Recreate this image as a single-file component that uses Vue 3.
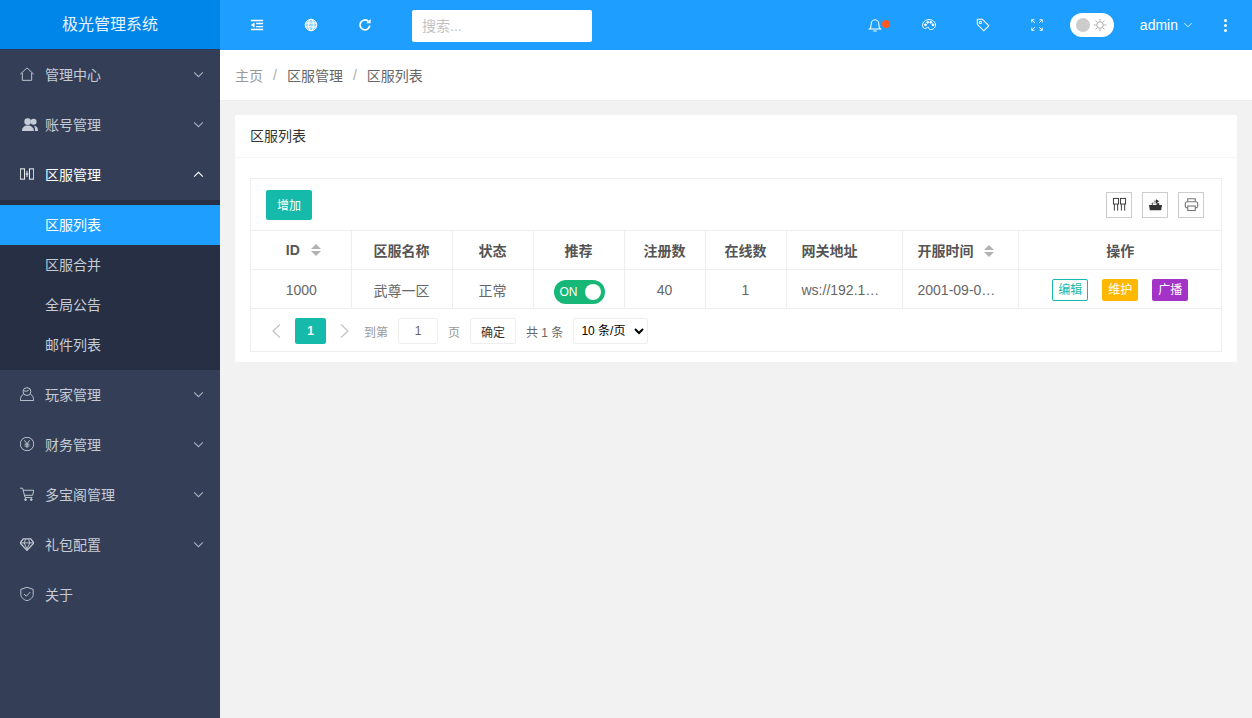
<script setup>
import { ref } from 'vue'

const menus = [
  { label: '管理中心', icon: 'home', arrow: true },
  { label: '账号管理', icon: 'users', arrow: true },
  { label: '区服管理', icon: 'server', arrow: true, open: true, children: ['区服列表', '区服合并', '全局公告', '邮件列表'] },
  { label: '玩家管理', icon: 'user', arrow: true },
  { label: '财务管理', icon: 'rmb', arrow: true },
  { label: '多宝阁管理', icon: 'cart', arrow: true },
  { label: '礼包配置', icon: 'diamond', arrow: true },
  { label: '关于', icon: 'shield', arrow: false }
]

const columns = [
  { label: 'ID', width: 101, sort: true, center: true, first: true },
  { label: '区服名称', width: 101, center: true },
  { label: '状态', width: 81, center: true },
  { label: '推荐', width: 91, center: true },
  { label: '注册数', width: 81, center: true },
  { label: '在线数', width: 81, center: true },
  { label: '网关地址', width: 116 },
  { label: '开服时间', width: 116, sort: true },
  { label: '操作', width: 204, center: true }
]

const keyword = ref('')
</script>

<template>
  <div class="layout">
    <aside class="side">
      <div class="logo">极光管理系统</div>
      <ul class="menu">
        <li v-for="m in menus" :key="m.label">
          <div class="menu-item" :class="{ open: m.open }">
            <span class="icon-box">
              <svg class="menu-icon" :class="{ wide: m.icon === 'users' }" viewBox="0.5 0.5 15 15" fill="none" stroke="currentColor" stroke-width="1">
                <template v-if="m.icon === 'home'">
                  <path d="M.8 8.200 8 1.500l7.200 6.700" />
                  <path d="M3 6.800v8h10v-8" />
                </template>
                <template v-else-if="m.icon === 'users'">
                  <g fill="currentColor" stroke="none">
                    <circle cx="5.800" cy="5.800" r="3.100" />
                    <circle cx="11.400" cy="5.800" r="2.800" />
                    <path d="M.5 14.500c0-3.200 2.100-5 5.300-5s5.800 1.800 5.800 5z" />
                    <path d="M12.600 14.500h2.900c0-2.800-1.100-4.600-3.900-4.800 1 1.200 1.300 3 1 4.800z" />
                  </g>
                </template>
                <template v-else-if="m.icon === 'server'">
                  <rect x=".8" y="2.500" width="4.600" height="11" />
                  <rect x="10.600" y="2.500" width="4.600" height="11" />
                  <path d="M6.600 8h2.800M8 4.800v6.400" />
                </template>
                <template v-else-if="m.icon === 'user'">
                  <circle cx="8" cy="5.400" r="4.200" />
                  <path d="M4.400 7.800C2.200 9.400 1 11.600.8 15h14.400c-.2-3.400-1.400-5.600-3.600-7.200" />
                  <path d="M4 4.400c2.200 1.100 5.400.7 6.400-1.200" />
                </template>
                <template v-else-if="m.icon === 'rmb'">
                  <circle cx="8" cy="8" r="7.200" />
                  <path d="m5.200 4 2.800 3.800L10.800 4M8 7.800v4.600M5.400 8.200h5.200M5.400 10.200h5.200" />
                </template>
                <template v-else-if="m.icon === 'cart'">
                  <path d="M.5 1.800h2.800l2.600 10h7.800" />
                  <path d="M3.800 4h11.400l-1.100 5.400H5" />
                  <circle cx="6.400" cy="14" r="1" fill="currentColor" />
                  <circle cx="12.600" cy="14" r="1" fill="currentColor" />
                </template>
                <template v-else-if="m.icon === 'diamond'">
                  <path d="M4 2.500h8l3.400 4.300L8 14.800.6 6.800z" stroke-width="1.400" />
                  <path d="M1 6.800h14M5 6.800 8 13.400l3-6.600M5 6.800l1.400-3.800M11 6.800 9.600 3" />
                </template>
                <template v-else>
                  <path d="M8 .8 14.600 3v5.400c0 3.400-3 5.700-6.600 6.900-3.600-1.200-6.600-3.500-6.600-6.900V3z" />
                  <path d="m4.800 8 2.400 2.400L11.400 6" />
                </template>
              </svg>
            </span>
            <span class="menu-label">{{ m.label }}</span>
            <svg v-if="m.arrow" class="menu-arrow" viewBox="0 0 12 8" fill="none" stroke="currentColor" stroke-width="1.200">
              <path :d="m.open ? 'M1 6.500 6 1.500l5 5' : 'M1 1.500l5 5 5-5'" />
            </svg>
          </div>
          <ul v-if="m.children" class="submenu">
            <li v-for="(c, i) in m.children" :key="c" class="sub-item" :class="{ active: i === 0 }">{{ c }}</li>
          </ul>
        </li>
      </ul>
    </aside>

    <div class="main">
      <header class="topbar">
        <div class="top-left">
          <span class="tool">
            <svg viewBox="0 0 16 16" fill="currentColor"><path d="M1 2h14v1.800H1zM7 5.300h8v1.700H7zM7 9h8v1.700H7zM1 12.200h14V14H1zM5.200 5v6L1 8z" /></svg>
          </span>
          <span class="tool">
            <svg viewBox="0 0 16 16" fill="none" stroke="currentColor" stroke-width="1.100"><circle cx="8" cy="8" r="6.600" fill="rgba(255,255,255,.55)" /><ellipse cx="8" cy="8" rx="2.900" ry="6.600" /><path d="M1.800 5.800h12.400M1.800 10.200h12.400" /></svg>
          </span>
          <span class="tool">
            <svg viewBox="0 0 16 16" fill="none" stroke="currentColor" stroke-width="2"><path d="M13.400 8.800A5.600 5.600 0 1 1 11.600 3.700" /><path d="M14.500 1v5H9.500z" fill="currentColor" stroke="none" /></svg>
          </span>
          <input v-model="keyword" class="search" placeholder="搜索..." />
        </div>
        <div class="top-right">
          <span class="tool">
            <svg viewBox="0 0 16 16" fill="none" stroke="currentColor" stroke-width="1.200"><path d="M1.800 12.600h12.400c-1.400-1-1.800-2.500-1.800-5.200 0-3-1.900-5.400-4.400-5.400S3.600 4.400 3.600 7.400c0 2.700-.4 4.200-1.800 5.200z" /><path d="M6 14.800h4" /></svg>
            <i class="dot"></i>
          </span>
          <span class="tool">
            <svg viewBox="0 0 16 16" fill="none" stroke="currentColor" stroke-width="1.100"><path d="M8 1.800C3.700 1.800.6 4.800.6 8.400c0 2.700 2 4 3.600 3.500 1.200-.4 2-1.700 3.200-1.200 1.100.5.200 1.700 1.300 2.400 2.800.8 6.700-1.500 6.700-5.100 0-3.500-3.200-6.200-7.400-6.200z" /><circle cx="4" cy="7.800" r="1.100" fill="currentColor" /><circle cx="6.500" cy="4.900" r="1.100" fill="currentColor" /><circle cx="10.100" cy="4.900" r="1.100" fill="currentColor" /><circle cx="12.500" cy="7.800" r="1.100" fill="currentColor" /></svg>
          </span>
          <span class="tool">
            <svg viewBox="0 0 16 16" fill="none" stroke="currentColor" stroke-width="1.200"><path d="M1.500 1.500h5.800l7.400 7.400-5.800 5.800-7.400-7.400z" /><circle cx="5" cy="5" r="1.300" /></svg>
          </span>
          <span class="tool">
            <svg viewBox="0 0 16 16" fill="none" stroke="currentColor" stroke-width="1.100"><path d="M2 5V2h3M2 2l3.600 3.600M11 2h3v3M14 2l-3.600 3.600M2 11v3h3M2 14l3.600-3.600M14 11v3h-3M14 14l-3.600-3.600" /></svg>
          </span>
          <span class="theme">
            <i class="knob"></i>
            <svg viewBox="0 0 16 16" fill="none" stroke="#999" stroke-width="1"><circle cx="8" cy="8" r="3.800" /><path d="M8 .8v2.200M8 13v2.200M.8 8H3M13 8h2.200M2.900 2.900l1.500 1.500M11.600 11.600l1.500 1.500M2.900 13.100l1.500-1.500M11.600 4.400l1.500-1.500" /></svg>
          </span>
          <span class="account">admin
            <svg viewBox="0 0 12 8" fill="none" stroke="currentColor" stroke-width="1.100"><path d="M1 1.500l5 5 5-5" /></svg>
          </span>
          <span class="more"><i></i><i></i><i></i></span>
        </div>
      </header>

      <nav class="crumbs">
        <span class="crumb-home">主页</span><span class="sep">/</span><span>区服管理</span><span class="sep">/</span><span>区服列表</span>
      </nav>

      <section class="content">
        <div class="card">
          <div class="card-head">区服列表</div>
          <div class="card-body">
            <div class="grid">
              <div class="toolbar">
                <button class="btn-add">增加</button>
                <div class="tool-icons">
                  <span class="tool-btn">
                    <svg viewBox="0 0 16 16" fill="none" stroke="#333" stroke-width="1"><rect x="1.500" y="1.500" width="5.500" height="6" /><rect x="9" y="1.500" width="5.500" height="6" /><path d="M2.500 7.500v7M6 7.500v7M10 7.500v7M13.500 7.500v7" /></svg>
                  </span>
                  <span class="tool-btn">
                    <svg viewBox="0 0 16 16" fill="#333"><path d="M1 8.500h14l-1 5.500H2z" /><path d="M4 8.500V6.200h4.400V4.800H6.500V4h2V2.400L12 4.600 8.500 6.800v-.2H5v1.900z" /><path d="M9 6.600h3v1.900H9z" /></svg>
                  </span>
                  <span class="tool-btn">
                    <svg viewBox="0 0 16 16" fill="none" stroke="#777" stroke-width="1.200"><path d="M4 5V1.800h8V5" /><rect x="1.400" y="5" width="13.200" height="6.600" rx="2" /><rect x="4" y="9.600" width="8" height="4.800" fill="#fff" /></svg>
                  </span>
                </div>
              </div>
              <table class="table">
                <colgroup>
                  <col v-for="c in columns" :key="c.label" :style="{ width: c.width + 'px' }" />
                </colgroup>
                <thead>
                  <tr>
                    <th v-for="c in columns" :key="c.label" :class="{ center: c.center, first: c.first }">
                      {{ c.label }}
                      <span v-if="c.sort" class="sort"><i class="up"></i><i class="down"></i></span>
                    </th>
                  </tr>
                </thead>
                <tbody>
                  <tr>
                    <td class="center first-cell">1000</td>
                    <td class="center">武尊一区</td>
                    <td class="center">正常</td>
                    <td class="center"><span class="switch">ON<i></i></span></td>
                    <td class="center">40</td>
                    <td class="center">1</td>
                    <td>ws://192.1…</td>
                    <td>2001-09-0…</td>
                    <td class="center">
                      <div class="actions">
                        <span class="act edit">编辑</span>
                        <span class="act warn">维护</span>
                        <span class="act purple">广播</span>
                      </div>
                    </td>
                  </tr>
                </tbody>
              </table>
              <div class="pager">
                <svg class="pg-arrow" viewBox="0 0 10 16" fill="none" stroke="#c2c2c2" stroke-width="1.200"><path d="M9 1.500 2 8l7 6.500" /></svg>
                <span class="pg-cur">1</span>
                <svg class="pg-arrow" viewBox="0 0 10 16" fill="none" stroke="#c2c2c2" stroke-width="1.200"><path d="M1 1.500 8 8l-7 6.500" /></svg>
                <span class="pg-text pg-jump">到第</span>
                <input class="pg-input" value="1" />
                <span class="pg-text">页</span>
                <button class="pg-ok">确定</button>
                <span class="pg-total">共 1 条</span>
                <select class="pg-size"><option>10 条/页</option></select>
              </div>
            </div>
          </div>
        </div>
      </section>
    </div>
  </div>
</template>

<style>
html, body { margin: 0; height: 100%; overflow: hidden; }
</style>

<style scoped>
* { box-sizing: border-box; }
ul { list-style: none; margin: 0; padding: 0; }
.layout {
  display: flex;
  width: 1252px;
  height: 718px;
  font-family: "Liberation Sans", "Noto Sans CJK SC", sans-serif;
  font-size: 14px;
  color: #666;
  background: #f2f2f2;
  overflow: hidden;
}

.side { width: 220px; flex: none; background: #343f57; }
.logo {
  height: 50px;
  line-height: 49px;
  text-align: center;
  font-size: 16px;
  color: #e6f4ff;
  background: #0085e8;
  border-bottom: 1px solid #2a3a58;
}
.menu-item {
  display: flex;
  align-items: center;
  height: 50px;
  padding-left: 20px;
  padding-bottom: 2px;
  color: #c6ccd6;
}
.menu-item.open { color: #fff; }
.icon-box { display: flex; width: 25px; flex: none; }
.menu-icon { width: 14px; height: 14px; }
.menu-icon.wide { width: 18px; height: 16px; margin-left: 1px; }
.menu-label { flex: 1; }
.menu-arrow { width: 11px; height: 7px; margin-right: 16px; color: #aab2c0; }
.menu-item.open .menu-arrow { color: #fff; }
.submenu { background: #262f44; padding: 5px 0; }
.sub-item { height: 40px; line-height: 40px; padding-left: 45px; color: #c6ccd6; }
.sub-item.active { background: #1e9fff; color: #fff; }

.main { flex: 1; min-width: 0; display: flex; flex-direction: column; }
.topbar {
  display: flex;
  justify-content: space-between;
  align-items: center;
  height: 50px;
  flex: none;
  background: #1e9fff;
  color: #fff;
  padding: 0 25px 0 30px;
}
.top-left, .top-right { display: flex; align-items: center; }
.tool { display: inline-flex; width: 14px; height: 14px; position: relative; margin-right: 40px; }
.tool svg { width: 14px; height: 14px; }
.search {
  width: 180px;
  height: 32px;
  margin-top: 2px;
  border: 0;
  border-radius: 2px;
  padding: 0 10px;
  font: inherit;
  outline: none;
}
.search::placeholder { color: #c2c2c2; }
.dot {
  position: absolute;
  top: 2px;
  left: 14px;
  width: 8px;
  height: 8px;
  border-radius: 50%;
  background: #ff5722;
}
.theme {
  display: flex;
  align-items: center;
  width: 44px;
  height: 24px;
  margin-left: -14px;
  padding: 0 6px;
  background: #fff;
  border-radius: 12px;
}
.knob { width: 14px; height: 14px; border-radius: 50%; background: #ccc; margin-right: 3px; flex: none; }
.theme svg { width: 14px; height: 14px; flex: none; }
.account { display: inline-flex; align-items: center; margin-left: 26px; }
.account svg { width: 10px; height: 6px; margin-left: 5px; }
.more { display: inline-flex; flex-direction: column; gap: 2px; margin-left: 31px; width: 3px; }
.more i { width: 3px; height: 3px; border-radius: 50%; background: #fff; }

.crumbs {
  height: 51px;
  flex: none;
  padding: 0 15px;
  display: flex;
  align-items: center;
  background: #fff;
  border-bottom: 1px solid #eee;
}
.crumb-home { color: #999; }
.sep { color: #aaa; margin: 0 10px; }

.content { flex: 1; padding: 14px 15px 0; }
.card { background: #fff; border-radius: 2px; }
.card-head {
  height: 43px;
  line-height: 42px;
  padding: 0 15px;
  color: #333;
  border-bottom: 1px solid #f6f6f6;
}
.card-body { padding: 20px 15px 10px; }
.grid { border: 1px solid #eee; }
.toolbar {
  display: flex;
  align-items: center;
  justify-content: space-between;
  height: 51px;
  padding: 0 17px 0 15px;
}
.btn-add {
  width: 46px;
  height: 30px;
  border: 0;
  border-radius: 2px;
  background: #16baaa;
  color: #fff;
  font: inherit;
  font-size: 12px;
}
.tool-icons { display: flex; gap: 10px; }
.tool-btn {
  display: flex;
  align-items: center;
  justify-content: center;
  width: 26px;
  height: 26px;
  border: 1px solid #ccc;
}
.tool-btn svg { width: 15px; height: 15px; }

.table { width: 972px; table-layout: fixed; border-collapse: collapse; margin-left: -1px; }
th, td {
  height: 39px;
  padding: 0 15px;
  border: 1px solid #eee;
  text-align: left;
  font-weight: 400;
  color: #666;
  white-space: nowrap;
}
td { padding-top: 2px; }
th { font-weight: 700; color: #555; }
th.center, td.center { text-align: center; }
th.first { padding-left: 21px; }
td.first-cell { padding-left: 17px; }
tr > :first-child { border-left: 0; }
tr > :last-child { border-right: 0; }
.sort { display: inline-block; width: 10px; margin-left: 7px; vertical-align: -1px; }
.sort i { display: block; width: 0; height: 0; border: 5px solid transparent; }
.sort .up { border-top: 0; border-bottom: 5px solid #b2b2b2; margin-bottom: 2px; }
.sort .down { border-bottom: 0; border-top: 5px solid #b2b2b2; }
.switch {
  display: inline-flex;
  align-items: center;
  justify-content: space-between;
  width: 51px;
  height: 24px;
  margin: 4px 0 0 1px;
  padding: 0 4px 0 6px;
  border-radius: 12px;
  background: #16b777;
  color: #fff;
  font-size: 12px;
  vertical-align: middle;
}
.switch i { width: 16px; height: 16px; border-radius: 50%; background: #fff; }
.actions { display: flex; justify-content: center; gap: 14px; }
.act {
  width: 36px;
  height: 22px;
  line-height: 22px;
  border-radius: 2px;
  font-size: 12px;
  text-align: center;
  color: #fff;
}
.edit { border: 1px solid #16baaa; background: #fff; color: #16baaa; line-height: 20px; }
.warn { background: #ffb800; }
.purple { background: #a233c6; }

.pager { display: flex; align-items: center; height: 42px; padding: 2px 0 0 20px; font-size: 12px; white-space: nowrap; }
.pg-arrow { width: 10px; height: 16px; flex: none; }
.pg-cur {
  width: 31px;
  height: 26px;
  line-height: 26px;
  margin: 0 14px;
  text-align: center;
  background: #16baaa;
  color: #fff;
  border-radius: 2px;
  font-weight: 700;
}
.pg-text { color: #999; }
.pg-jump { margin-left: 14px; }
.pg-input {
  width: 40px;
  height: 26px;
  margin: 0 10px;
  border: 1px solid #eee;
  border-radius: 2px;
  text-align: center;
  font: inherit;
  color: #666;
}
.pg-ok {
  width: 46px;
  height: 26px;
  margin-left: 10px;
  padding: 0;
  border: 1px solid #eee;
  border-radius: 2px;
  background: #fff;
  color: #333;
  font: inherit;
}
.pg-total { margin-left: 10px; color: #666; }
.pg-size {
  width: 75px;
  height: 26px;
  margin-left: 10px;
  padding-left: 3px;
  border: 1px solid #eee;
  border-radius: 2px;
  background: #fff;
  color: #000;
  font: inherit;
}
</style>
